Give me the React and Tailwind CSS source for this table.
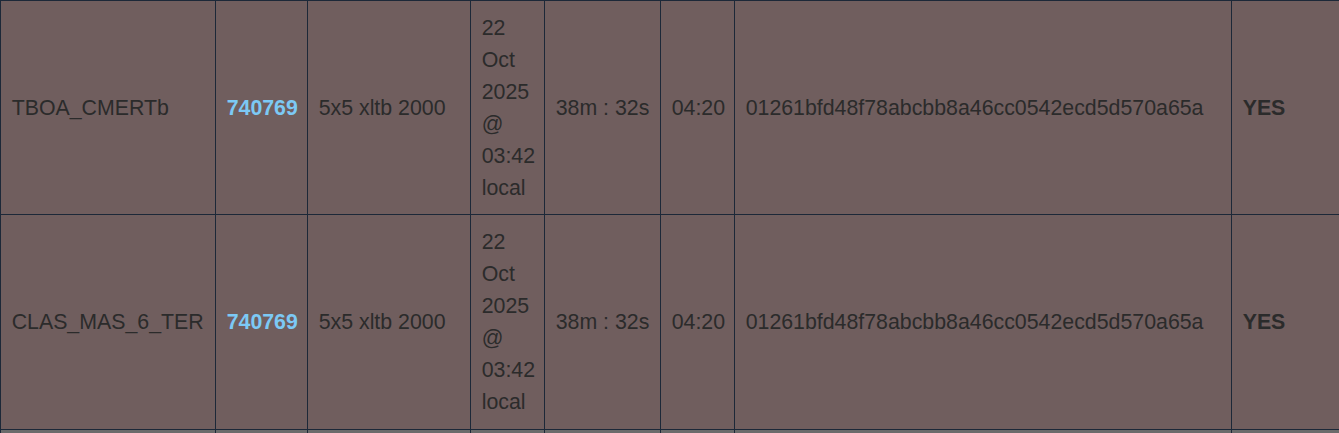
const rows = [
  { name: 'TBOA_CMERTb' },
  { name: 'CLAS_MAS_6_TER' },
];

const cell = 'border border-[#1c2838] px-[10.67px] py-[10.67px] align-middle';

export default function App() {
  return (
    <div className="w-[1339px] h-[433px] overflow-hidden bg-[#6b6b6b]">
      <table
        className="table-fixed border-collapse w-[1339px] text-[21.33px] leading-[32px] text-[#2b2b2b]"
        style={{ fontFamily: '"Liberation Sans", Arial, sans-serif' }}
      >
        <colgroup>
          <col className="w-[215px]" />
          <col className="w-[92px]" />
          <col className="w-[163px]" />
          <col className="w-[74px]" />
          <col className="w-[116px]" />
          <col className="w-[74px]" />
          <col className="w-[497px]" />
          <col className="w-[108px]" />
        </colgroup>
        <tbody>
          {rows.map((r) => (
            <tr key={r.name} className="bg-[#705e5e]">
              <td className={cell}>{r.name}</td>
              <td className={`${cell} font-bold text-[#7cc9f5]`}>740769</td>
              <td className={cell}>5x5 xltb 2000</td>
              <td className={cell}>22 Oct 2025 @ 03:42 local</td>
              <td className={cell}>38m : 32s</td>
              <td className={cell}>04:20</td>
              <td className={cell}>01261bfd48f78abcbb8a46cc0542ecd5d570a65a</td>
              <td className={`${cell} font-bold`}>YES</td>
            </tr>
          ))}
          {/* next row starts just below the fold */}
          <tr className="bg-[#6b6b6b] h-[40px]">
            {Array.from({ length: 8 }).map((_, i) => (
              <td key={i} className="border border-[#1c2838]" />
            ))}
          </tr>
        </tbody>
      </table>
    </div>
  );
}
